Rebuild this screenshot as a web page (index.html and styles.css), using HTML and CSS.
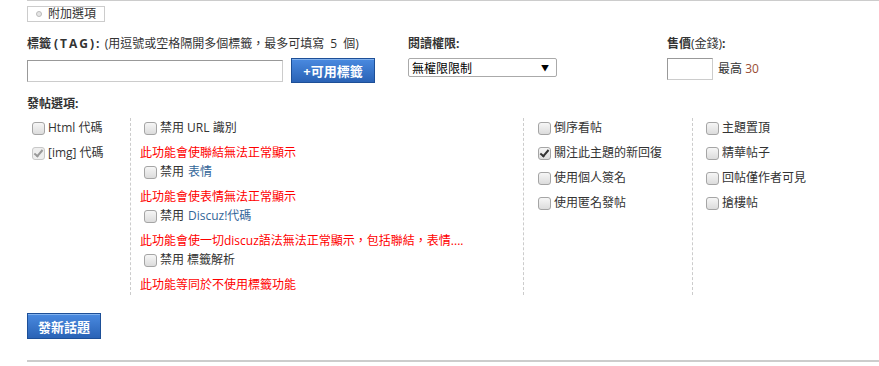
FILE: index.html
```html
<!DOCTYPE html>
<html lang="zh-Hant">
<head>
  <meta charset="UTF-8">
  <title>發新話題</title>
  <link rel="stylesheet" href="styles.css">
</head>
<body>

<div class="post-form">

  <!-- extra options tab -->
  <div class="tab"><span class="dot"></span>附加選項</div>

  <div class="fields">
    <div class="field f-tag">
      <div class="lbl"><b>標籤<span class="wide">(TAG):</span></b> <span class="note">(用逗號或空格隔開多個標籤，最多可填寫 5 個)</span></div>
      <div class="row">
        <input type="text" class="txt tag-input">
        <button class="btn btn-tag">+可用標籤</button>
      </div>
    </div>
    <div class="field f-perm">
      <div class="lbl"><b>閱讀權限:</b></div>
      <div class="select"><span>無權限限制</span><span class="arrow">▼</span></div>
    </div>
    <div class="field f-price">
      <div class="lbl"><b>售價</b>(金錢)<b>:</b></div>
      <div class="row">
        <input type="text" class="txt price-input">
        <span class="max">最高 <em>30</em></span>
      </div>
    </div>
  </div>

  <div class="lbl opt-title"><b>發帖選項:</b></div>

  <div class="options">
    <div class="col col1">
      <label class="opt"><input type="checkbox">Html 代碼</label>
      <label class="opt"><input type="checkbox" checked disabled>[img] 代碼</label>
    </div>
    <div class="col col2">
      <label class="opt"><input type="checkbox">禁用 URL 識別</label>
      <p class="warn">此功能會使聯結無法正常顯示</p>
      <label class="opt"><input type="checkbox">禁用 <a href="#">表情</a></label>
      <p class="warn">此功能會使表情無法正常顯示</p>
      <label class="opt"><input type="checkbox">禁用 <a href="#">Discuz!代碼</a></label>
      <p class="warn">此功能會使一切discuz語法無法正常顯示，包括聯結，表情....</p>
      <label class="opt"><input type="checkbox">禁用 標籤解析</label>
      <p class="warn">此功能等同於不使用標籤功能</p>
    </div>
    <div class="col col3">
      <label class="opt"><input type="checkbox">倒序看帖</label>
      <label class="opt"><input type="checkbox" checked>關注此主題的新回復</label>
      <label class="opt"><input type="checkbox">使用個人簽名</label>
      <label class="opt"><input type="checkbox">使用匿名發帖</label>
    </div>
    <div class="col col4">
      <label class="opt"><input type="checkbox">主題置頂</label>
      <label class="opt"><input type="checkbox">精華帖子</label>
      <label class="opt"><input type="checkbox">回帖僅作者可見</label>
      <label class="opt"><input type="checkbox">搶樓帖</label>
    </div>
  </div>

  <button class="btn btn-post">發新話題</button>

</div>

</body>
</html>
```

FILE: styles.css
```css
/* post form */
html{
  overflow: hidden;
}
body{
  margin: 0;
  font-family: "Open Sans", "Noto Sans CJK TC", sans-serif;
  font-size: 12px;
  color: #333;
  background: #fff;
}
.post-form{
  margin-left: 27px;
  border-top: 1px solid #ccc;
  border-bottom: 2px solid #ccc;
  padding-bottom: 21px;
}

/* tab */
.tab{
  display: inline-flex;
  align-items: center;
  margin-top: 5px;
  height: 14px;
  line-height: 14px;
  padding: 0 8px 0 8px;
  border: 1px solid #ccc;
}
.dot{
  width: 4px;
  height: 4px;
  border-radius: 50%;
  border: 1px solid #bbb;
  background: #e5e5e5;
  margin-right: 6px;
}

/* first row */
.lbl{
  line-height: 18px;
  white-space: nowrap;
}
.lbl b{
  font-weight: bold;
  color: #333;
}
.lbl .wide{
  letter-spacing: 2px;
  margin-left: 3px;
}
.lbl .note{
  word-spacing: 3px;
}
.fields{
  display: flex;
  margin-top: 13px;
}
.field .lbl{
  margin-bottom: 5px;
}
.f-tag{ width: 381px; flex: none; }
.f-perm{ width: 259px; flex: none; }
.row{
  display: flex;
  align-items: flex-start;
}
.txt{
  box-sizing: border-box;
  border: 1px solid #ccc;
  border-top-color: #999;
  border-left-color: #999;
  padding: 0 3px;
  margin: 0;
  font: inherit;
  outline: none;
}
.tag-input{
  width: 256px;
  height: 22px;
  margin-top: 2px;
}
.price-input{
  width: 46px;
  height: 22px;
}
.max{
  margin-left: 5px;
  line-height: 22px;
}
.max em{
  font-style: normal;
  color: #994c33;
}
.select{
  box-sizing: border-box;
  width: 149px;
  height: 19px;
  border: 1px solid #aaa;
  border-radius: 2px;
  display: flex;
  justify-content: space-between;
  align-items: center;
  padding: 0 7px 0 3px;
  color: #000;
}
.arrow{
  font-size: 8px;
}

/* buttons */
.btn{
  box-sizing: border-box;
  border: 1px solid #1d4f97;
  background: linear-gradient(#4a8ae0, #2a63b6);
  box-shadow: inset 0 1px 0 #82b2ee;
  color: #fff;
  font-family: inherit;
  font-size: 13px;
  font-weight: bold;
  padding: 0;
  cursor: pointer;
}
.btn-tag{
  width: 84px;
  height: 25px;
  margin-left: 8px;
}
.btn-post{
  display: block;
  width: 74px;
  height: 26px;
  margin-top: 18px;
}

/* options */
.opt-title{
  margin-top: 12px;
}
.options{
  display: flex;
  margin-top: 5px;
}
.col{
  box-sizing: border-box;
  min-height: 177px;
  flex: none;
}
.col2, .col3, .col4{
  border-left: 1px dashed #ccc;
}
.col1{ width: 103px; padding-left: 5px; }
.col2{ width: 393px; padding-left: 9px; }
.col3{ width: 169px; padding-left: 14px; }
.col4{ flex: 1; padding-left: 13px; }

.opt{
  display: flex;
  align-items: center;
  line-height: 19px;
  white-space: nowrap;
}
.col1 .opt + .opt,
.col3 .opt + .opt,
.col4 .opt + .opt{
  margin-top: 6px;
}
.col2 .opt{
  padding-left: 4px;
}
.opt a{
  color: #336699;
  text-decoration: none;
  margin-left: 4px;
}
.warn{
  margin: 6px 0 0;
  line-height: 19px;
  color: #f00;
  white-space: nowrap;
}

/* checkbox */
.opt input{
  appearance: none;
  -webkit-appearance: none;
  box-sizing: border-box;
  width: 13px;
  height: 13px;
  margin: 1px 3px 0 0;
  border: 1px solid #a5a5a5;
  border-radius: 3px;
  background: linear-gradient(#f6f6f6, #dcdcdc);
  position: relative;
  flex: none;
}
.opt input:checked::after{
  content: "";
  position: absolute;
  left: 3px;
  top: 0px;
  width: 3px;
  height: 7px;
  border: solid #333;
  border-width: 0 2px 2px 0;
  transform: rotate(40deg);
}
.opt input:disabled{
  border-color: #c8c8c8;
  background: #eee;
}
.opt input:disabled::after{
  border-color: #999;
}
```
